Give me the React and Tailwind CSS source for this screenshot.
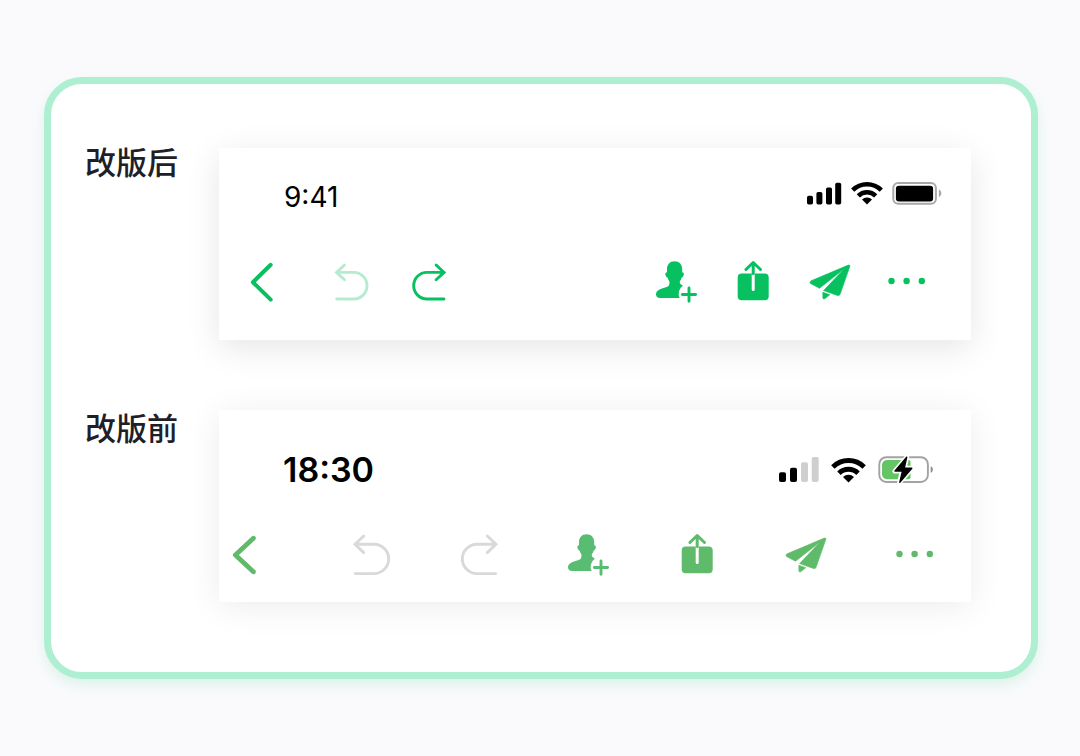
import React from 'react';

const BackIcon = ({ bold }) => (
  <svg className="size-11" viewBox="0 0 44 44" fill="none" stroke="currentColor" strokeWidth={bold ? 4.8 : 4} strokeLinecap="round" strokeLinejoin="round">
    <path d={bold ? 'M30.4 5.2L12.4 22l18 16.8' : 'M30.7 4.8L12.9 22.2l17.8 17.4'} />
  </svg>
);

const UndoIcon = ({ large }) => (
  <svg className="size-11" viewBox="0 0 44 44" fill="none" stroke="currentColor" strokeWidth="2.9" strokeLinecap="round">
    {large ? (
      <path d="M15.7 3L7 11.300l8.700 8.300M7.500 11.300H26a14.650 14.650 0 0 1 0 29.300H7.300" />
    ) : (
      <path d="M14.500 5l-8 7.400 8 7.400M7 12.400h16.700a13.300 13.300 0 0 1 0 26.600H6.700" />
    )}
  </svg>
);

const RedoIcon = ({ large }) => (
  <svg className="size-11" viewBox="0 0 44 44" fill="none" stroke="currentColor" strokeWidth="2.9" strokeLinecap="round">
    {large ? (
      <path d="M30.300 3L39 11.300l-8.700 8.300M38.500 11.300H20a14.650 14.650 0 0 0 0 29.300h18.700" />
    ) : (
      <path d="M29.100 5l8 7.400-8 7.400M36.700 12.400H20a13.300 13.300 0 0 0 0 26.600h17" />
    )}
  </svg>
);

const AddUserIcon = () => (
  <svg className="size-11" viewBox="0 0 44 44" fill="currentColor">
    <path d="M20.6 1.2C15.8 1.2 13 4.6 13 9v3.3c-1.3.2-1.9 1.200-1.600 2.500.3 1.500 1.200 2.500 2.200 3 .4 1.400 1 2.500 1.700 3.300.3 2.100.1 4-.8 4.900C12.500 27.400 8.500 28 5.500 29.400 3.300 30.500 2 32.200 2 34.200 2 36.600 3.500 38 6.300 38h19.300a9.800 9.800 0 0 1 3.200-12.200c-.3-.6-.8-1-1.600-1.300-1.300-.5-1.600-1.500-1.300-3.400.8-.8 1.400-1.900 1.700-3.300 1-.5 1.900-1.500 2.200-3 .3-1.300-.3-2.300-1.600-2.500V9c0-4.400-2.800-7.800-7.600-7.800z" />
    <path d="M35 28v13.200M28.400 34.500h13.200" fill="none" stroke="currentColor" strokeWidth="2.900" strokeLinecap="round" />
  </svg>
);

const ShareIcon = () => (
  <svg className="size-11" viewBox="0 0 44 44" fill="none" strokeLinecap="round" strokeLinejoin="round">
    <rect x="6.700" y="13.500" width="31" height="26.800" rx="4" fill="currentColor" />
    <path d="M22.200 14.500v15" stroke="#fff" strokeWidth="3" />
    <path d="M22.200 13.500V2.500M14.900 9.500l7.300-7 7.300 7" stroke="currentColor" strokeWidth="3" />
  </svg>
);

const SendIcon = () => (
  <svg className="size-11" viewBox="0 0 44 44" fill="currentColor" stroke="currentColor" strokeWidth="0.6" strokeLinejoin="round">
    <path d="M40.300 5.100L3.100 20.800c-1.500.7-1.500 2.300-.1 3l8.500 4.500L36 9 15.600 30.600l13.700 4.800c1.400.5 2.400-.1 2.900-1.400l9.600-27.400c.4-1.100-.4-1.900-1.500-1.500z" />
    <path d="M14.800 32.200l7 2.500-4.800 3.900c-1.100.8-2.200.3-2.200-1z" />
  </svg>
);

const MoreIcon = () => (
  <svg className="size-11" viewBox="0 0 44 44" fill="currentColor">
    <circle cx="6.500" cy="21" r="3.200" />
    <circle cx="21.600" cy="21" r="3.200" />
    <circle cx="36.800" cy="21" r="3.200" />
  </svg>
);

const Wifi = ({ className }) => (
  <svg className={className} viewBox="0 0 32 24" fill="none" stroke="#000" strokeWidth="4.500">
    <path d="M1.700 9.200a20.200 20.200 0 0 1 28.600 0" />
    <path d="M7.300 14.900a12.300 12.300 0 0 1 17.400 0" />
    <path d="M16 23.500l-5-5a7.100 7.100 0 0 1 10 0z" fill="#000" stroke="none" />
  </svg>
);

const IconButton = ({ label, className = '', children }) => (
  <button type="button" aria-label={label} className={`size-11 shrink-0 ${className}`}>
    {children}
  </button>
);

const NewToolbar = () => (
  <div className="min-w-0 flex-1 bg-white pt-[33px] pb-9 shadow-[0_8px_32px_rgba(0,0,0,0.1)]">
    <div className="flex items-start justify-between pr-[29px] pl-[65px]">
      <span className="font-['Inter',sans-serif] text-[28px] leading-8 text-black">9:41</span>
      <div className="flex gap-[9px]">
        <svg className="h-6 w-[35px]" viewBox="0 0 35 24">
          <rect x="0" y="14.700" width="6" height="8.700" rx="1.700" />
          <rect x="9.400" y="11" width="6" height="12.400" rx="1.700" />
          <rect x="19" y="6.400" width="6" height="17" rx="1.700" />
          <rect x="28.200" y="1.700" width="6" height="21.700" rx="1.700" />
        </svg>
        <Wifi className="h-6 w-8" />
        <svg className="h-6 w-[50px]" viewBox="0 0 50 24">
          <rect x="1.300" y="2" width="42.600" height="20.800" rx="5" fill="none" stroke="#a8a8a8" strokeWidth="2" />
          <rect x="3.900" y="4.700" width="37.200" height="15.700" rx="3" />
          <path d="M46.900 8.600c1.500.6 2.400 1.900 2.400 3.700s-.9 3.200-2.400 3.800z" fill="#a8a8a8" />
        </svg>
      </div>
    </div>
    <div className="mt-[47px] flex justify-between pr-[42px] pl-[21px] text-[#07c160]">
      <div className="flex gap-[33px]">
        <IconButton label="返回" className="mr-[13px]"><BackIcon /></IconButton>
        <IconButton label="撤销" className="text-[#b5ecd0]"><UndoIcon /></IconButton>
        <IconButton label="重做"><RedoIcon /></IconButton>
      </div>
      <div className="flex gap-[33px]">
        <IconButton label="添加成员"><AddUserIcon /></IconButton>
        <IconButton label="分享"><ShareIcon /></IconButton>
        <IconButton label="发送"><SendIcon /></IconButton>
        <IconButton label="更多"><MoreIcon /></IconButton>
      </div>
    </div>
  </div>
);

const OldToolbar = () => (
  <div className="min-w-0 flex-1 bg-white pt-10 pb-[25px] shadow-[0_4px_32px_rgba(0,0,0,0.08)]">
    <div className="flex items-center justify-between pr-[37px] pl-16">
      <span className="font-['Inter',sans-serif] text-[34px] leading-10 font-semibold text-black">18:30</span>
      <div className="flex gap-3">
        <svg className="h-7 w-10" viewBox="0 0 40 28">
          <rect x="0" y="16.300" width="7" height="9.700" rx="1.900" />
          <rect x="11" y="11.700" width="7" height="14.300" rx="1.900" />
          <rect x="22" y="6.300" width="7" height="19.700" rx="1.900" fill="#cfcfcf" />
          <rect x="32.700" y="1" width="7" height="25" rx="1.900" fill="#cfcfcf" />
        </svg>
        <Wifi className="h-7 w-[35px]" />
        <svg className="h-7 w-14" viewBox="0 0 56 28">
          <rect x="1.300" y="1.200" width="48.600" height="24.800" rx="7" fill="none" stroke="#a3a3a3" strokeWidth="1.900" />
          <path d="M9 4h21.500a2 2 0 0 1 2 2v15.300a2 2 0 0 1-2 2H9a5 5 0 0 1-5-5V9a5 5 0 0 1 5-5z" fill="#64c466" />
          <path d="M52.700 10.300c1.400.5 2.200 1.700 2.200 3.300s-.8 2.800-2.200 3.300z" fill="#8f8f8f" />
          <path d="M29 .8L16.700 15.200H24L21.300 26.800 34.200 12h-7.600z" stroke="#fff" strokeWidth="4.500" strokeLinejoin="round" fill="#fff" />
          <path d="M28.700 1.300L17 15h7.500L21.800 26.300 33.800 12.300h-7.600z" stroke="#000" strokeWidth="1.400" strokeLinejoin="round" />
        </svg>
      </div>
    </div>
    <div className="mt-[43px] flex justify-between pr-[34px] pl-1 text-[#5fba6a]">
      <IconButton label="返回"><BackIcon bold /></IconButton>
      <div className="flex gap-[65px]">
        <IconButton label="撤销" className="text-[#d9d9d9]"><UndoIcon large /></IconButton>
        <IconButton label="重做" className="text-[#d9d9d9]"><RedoIcon large /></IconButton>
        <IconButton label="添加成员" className="text-[#58bd72]"><AddUserIcon /></IconButton>
        <IconButton label="分享"><ShareIcon /></IconButton>
        <IconButton label="发送"><SendIcon /></IconButton>
        <IconButton label="更多"><MoreIcon /></IconButton>
      </div>
    </div>
  </div>
);

const App = () => {
  return (
    <main className="min-h-screen bg-[#fafafc] pt-[77px] pr-[42px] pb-[77px] pl-11 font-['Noto_Sans_CJK_SC',sans-serif]">
      <div className="flex flex-col gap-[70px] rounded-[38px] border-[7px] border-[#aeefd2] bg-white pt-16 pr-[60px] pb-[70px] pl-[34px] shadow-[0_6px_14px_rgba(7,193,96,0.12)]">
        <section className="flex items-start">
          <h2 className="w-[134px] shrink-0 text-[31px] leading-[26px] font-medium text-[#1f2026]">改版后</h2>
          <NewToolbar />
        </section>
        <section className="flex items-start">
          <h2 className="w-[134px] shrink-0 text-[31px] leading-[34px] font-medium text-[#1f2026]">改版前</h2>
          <OldToolbar />
        </section>
      </div>
    </main>
  );
};

export default App;
